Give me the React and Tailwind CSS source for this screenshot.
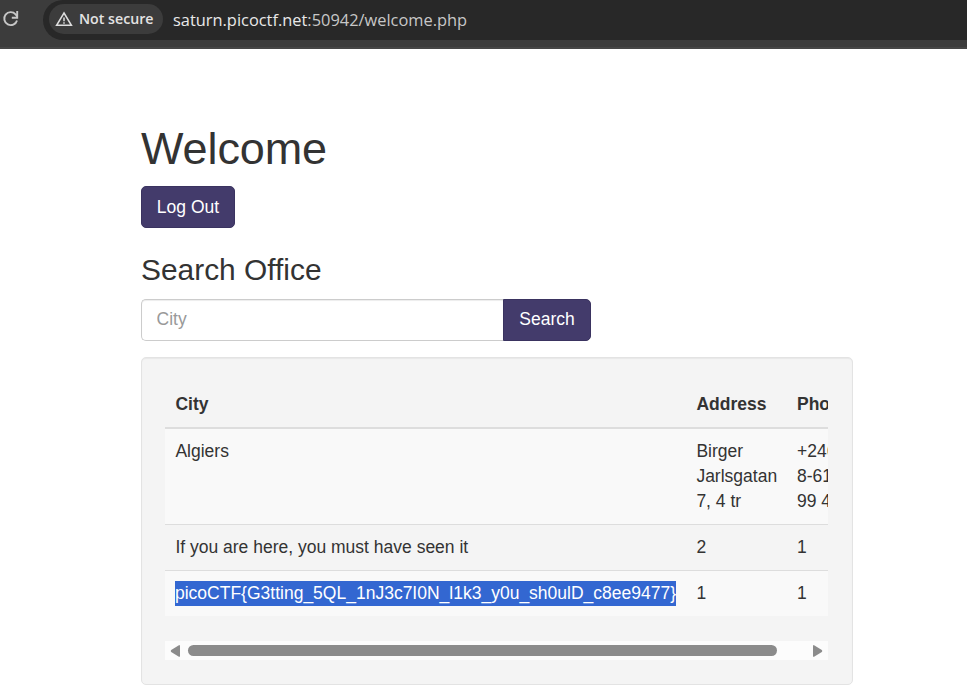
import React from "react";

function BrowserBar() {
  return (
    <header className="flex h-[49px] items-start bg-[#3c3c3c] border-b-2 border-[#464646] font-['Open_Sans',sans-serif]">
      <svg className="mt-[10px] ml-[2px] h-[17px] w-[17px] shrink-0" viewBox="0 0 17 17" fill="none" stroke="#c7c7c7" strokeWidth="1.9">
        <path d="M15 10.4A6.5 6.5 0 1 1 13.6 4.3L15.4 6.6" />
        <path d="M15.2 1V7.7H9.8" />
      </svg>
      <div className="ml-[24px] flex h-10 flex-1 items-start rounded-bl-[20px] rounded-tl-[20px] bg-[#282828] pl-[6px] pt-1">
        <div className="flex h-[30px] w-[114px] shrink-0 items-center rounded-full bg-[#3c3c3c] pl-[6px]">
          <svg className="h-[16px] w-[18px] shrink-0" viewBox="0 0 18 16" fill="none" stroke="#dedede" strokeWidth="1.5">
            <path d="M9 2L16.4 14.3H1.6Z" />
            <path d="M9 6.4V10.2M9 11.2V12.8" />
          </svg>
          <span className="ml-[6px] whitespace-nowrap text-[14.2px] font-semibold leading-5 text-[#e3e3e3]">Not secure</span>
        </div>
        <div className="ml-[10px] mt-[4px] whitespace-nowrap text-[16.4px] leading-6 text-[#c7c7c7]">
          <span className="text-[#e8e8e8]">saturn.picoctf.net</span>:50942/welcome.php
        </div>
      </div>
    </header>
  );
}

const rows = [
  { city: "Algiers", address: ["Birger", "Jarlsgatan", "7, 4 tr"], phone: ["+246", "8-616", "99 40"] },
  { city: "If you are here, you must have seen it", address: ["2"], phone: ["1"] },
  { city: "picoCTF{G3tting_5QL_1nJ3c7I0N_l1k3_y0u_sh0ulD_c8ee9477}", address: ["1"], phone: ["1"], selected: true },
];

const cols = "grid w-[760px] grid-cols-[521px_100.6px_138.4px]";

function Lines({ items }) {
  return (
    <div className="whitespace-nowrap py-[10px] pl-[10.4px]">
      {items.map((t) => (
        <div key={t}>{t}</div>
      ))}
    </div>
  );
}

function Results() {
  return (
    <section className="mt-4 h-[328px] w-[712px] rounded-[5px] border border-[#e3e3e3] bg-[#f4f4f4] px-[23px] pt-6 shadow-[inset_0_1px_1px_rgba(0,0,0,0.05)]">
      <div className="w-[663px] overflow-hidden">
        <div className={`${cols} h-[47px] border-b-2 border-[#ddd] font-bold`}>
          <Lines items={["City"]} />
          <Lines items={["Address"]} />
          <Lines items={["Phone"]} />
        </div>
        {rows.map((r, i) => (
          <div key={r.city} className={`${cols} ${i === 1 ? "" : "bg-[#f9f9f9]"} ${i > 0 ? "border-t border-[#ddd]" : ""}`}>
            {r.selected ? (
              <div className="whitespace-nowrap p-[10px]">
                <div className="w-[501px] bg-[#3367d1] text-white">{r.city}</div>
              </div>
            ) : (
              <Lines items={[r.city]} />
            )}
            <Lines items={r.address} />
            <Lines items={r.phone} />
          </div>
        ))}
      </div>
      <div className="mt-[25px] flex h-[19px] w-[663px] items-center bg-[#fcfcfc]">
        <svg className="ml-[5px] h-[14px] w-[11px]" viewBox="0 0 11 14" fill="#8b8b8b">
          <path d="M10 2.2V11.8Q10 13.5 8.5 12.6L1.2 8Q0.2 7 1.2 6L8.5 1.4Q10 0.5 10 2.2Z" />
        </svg>
        <div className="ml-[7px] h-[11px] w-[589px] rounded-full bg-[#8b8b8b]" />
        <svg className="ml-[35px] h-[14px] w-[11px]" viewBox="0 0 11 14" fill="#8b8b8b">
          <path d="M1 2.2V11.8Q1 13.5 2.5 12.6L9.8 8Q10.8 7 9.8 6L2.5 1.4Q1 0.5 1 2.2Z" />
        </svg>
      </div>
    </section>
  );
}

export default function App() {
  return (
    <div className="h-[692px] w-[967px] overflow-hidden bg-white font-['Liberation_Sans',Arial,sans-serif] text-[17.5px] leading-[25px] text-[#333]">
      <BrowserBar />
      <main className="ml-[141px] pt-[75px]">
        <h1 className="h-[50px] text-[45px] leading-[50px] tracking-[-0.1px]">Welcome</h1>
        <button className="mt-3 block h-[42px] w-[94px] rounded-[5px] border border-[#3a3360] bg-[#433b6b] text-white">Log Out</button>
        <h3 className="mt-[25px] h-[33px] text-[29.9px] leading-[33px]">Search Office</h3>
        <div className="mt-[13px] flex h-[42px] w-[450px]">
          <input
            className="h-full w-[362px] rounded-l-[5px] border border-r-0 border-[#ccc] bg-white px-[14.6px] pb-[2px] shadow-[inset_0_1px_1px_rgba(0,0,0,0.075)] placeholder:text-[#999]"
            placeholder="City"
          />
          <button className="h-full w-[88px] rounded-r-[5px] border border-[#3a3360] bg-[#433b6b] pb-[2px] text-white">Search</button>
        </div>
        <Results />
      </main>
    </div>
  );
}
